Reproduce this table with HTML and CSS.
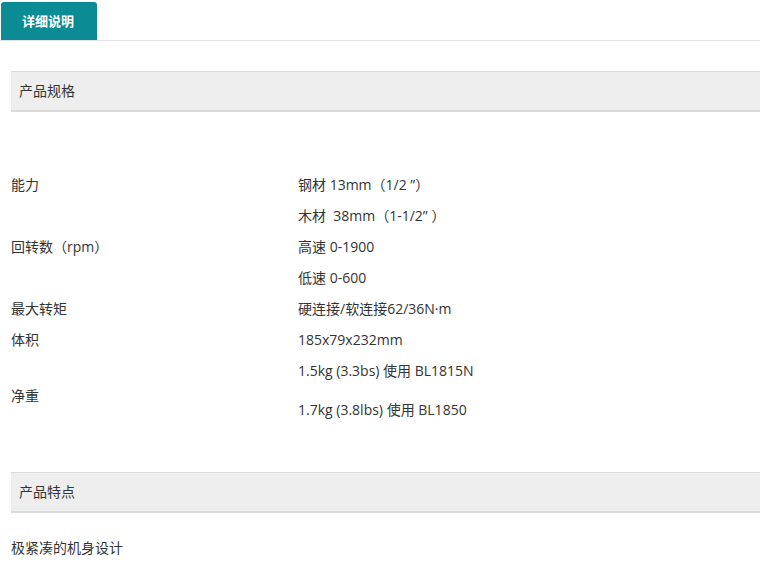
FILE: index.html
```html
<!DOCTYPE html>
<html lang="zh">
<head>
<meta charset="utf-8">
<link rel="stylesheet" href="styles.css">
</head>
<body>
<div class="tabs">
  <div class="tab">详细说明</div>
</div>
<div class="content">
  <div class="section-head">产品规格</div>
  <div class="specs">
    <div class="row">
      <div class="label">能力</div>
      <div class="values"><div class="v">钢材 13mm（1/2 ”）</div><div class="v">木材&nbsp; 38mm（1-1/2” ）</div></div>
    </div>
    <div class="row">
      <div class="label">回转数（rpm）</div>
      <div class="values"><div class="v">高速 0-1900</div><div class="v">低速 0-600</div></div>
    </div>
    <div class="row">
      <div class="label">最大转矩</div>
      <div class="values"><div class="v">硬连接/软连接62/36N·m</div></div>
    </div>
    <div class="row">
      <div class="label">体积</div>
      <div class="values"><div class="v">185x79x232mm</div><div class="v">1.5kg (3.3bs) 使用 BL1815N</div></div>
    </div>
    <div class="row row-weight">
      <div class="label">净重</div>
      <div class="values"><div class="v">1.7kg (3.8lbs) 使用 BL1850</div></div>
    </div>
  </div>
  <div class="section-head head-2">产品特点</div>
  <p class="feature">极紧凑的机身设计</p>
</div>
</body>
</html>
```
FILE: styles.css
```css
html, body {
  margin: 0;
  padding: 0;
  background: #fff;
}
body {
  font-family: "Open Sans", "Noto Sans CJK SC", sans-serif;
  font-size: 14px;
  color: #333;
  width: 760px;
  overflow: hidden;
}
.tabs {
  padding: 2px 0 0 1px;
  border-bottom: 1px solid #e3e3e3;
  display: flex;
}
.tab {
  width: 96px;
  height: 38px;
  background: #0b8b93;
  color: #fff;
  font-weight: bold;
  font-size: 13px;
  line-height: 38px;
  text-align: center;
  border-radius: 3px 3px 0 0;
  box-sizing: border-box;
  padding-right: 2px;
}
.content {
  padding-left: 11px;
}
.section-head {
  margin-top: 30px;
  height: 38px;
  line-height: 38px;
  background: #eeeeee;
  border-top: 1px solid #dcdcdc;
  border-bottom: 2px solid #dadada;
  padding-left: 8px;
  font-size: 14px;
  color: #333;
  margin-right: -10px;
}
.specs {
  padding-top: 57px;
}
.row {
  display: flex;
}
.label {
  width: 287px;
  flex: none;
  line-height: 31px;
}
.values .v {
  line-height: 31px;
}
.row-weight .label {
  line-height: 20px;
}
.row-weight .values .v {
  line-height: 20px;
  padding-top: 14px;
}
.head-2 {
  margin-top: 52px;
}
.feature {
  margin: 25px 0 0 0;
  line-height: 20px;
}
```
